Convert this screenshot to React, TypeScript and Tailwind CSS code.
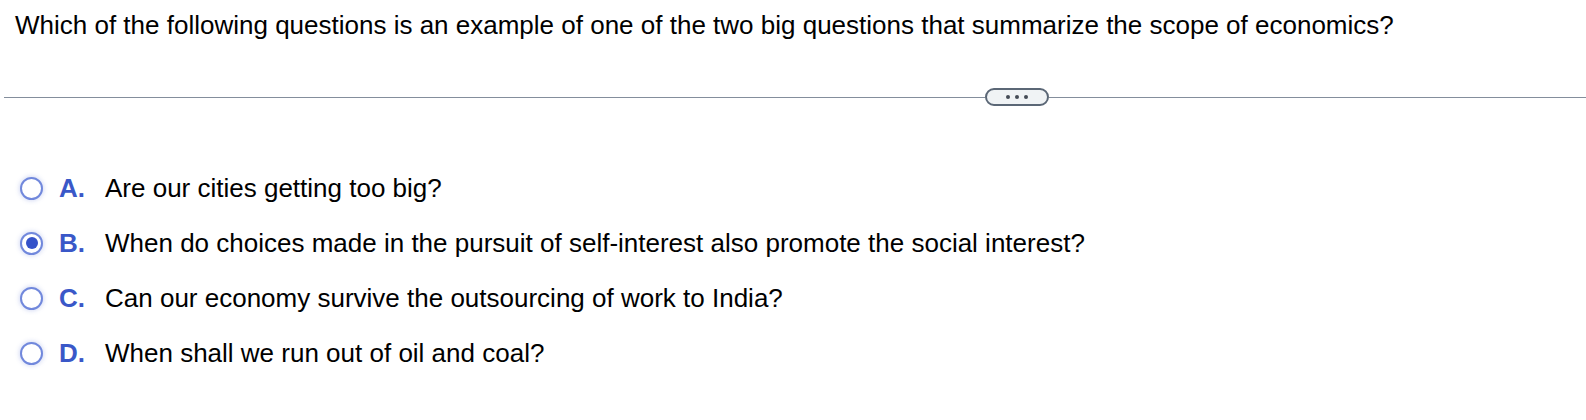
import React from 'react'

const FONT = { fontFamily: '"Liberation Sans", Arial, sans-serif' }

const OPTIONS = [
  { letter: 'A.', text: 'Are our cities getting too big?' },
  { letter: 'B.', text: 'When do choices made in the pursuit of self-interest also promote the social interest?' },
  { letter: 'C.', text: 'Can our economy survive the outsourcing of work to India?' },
  { letter: 'D.', text: 'When shall we run out of oil and coal?' },
]

function Radio({ checked }: { checked: boolean }) {
  return (
    <span className="flex h-[23px] w-[23px] shrink-0 items-center justify-center rounded-full border-2 border-[#7188dc] bg-white shadow-[0_0_4px_1px_rgba(120,140,220,0.3)]">
      {checked && <span className="h-[12px] w-[12px] rounded-full bg-[#3552c9]" />}
    </span>
  )
}

export default function App() {
  const selected = 1
  return (
    <div className="h-[420px] w-[1586px] bg-white text-black" style={FONT}>
      <p className="pl-[15px] pt-[10px] text-[26px] leading-[30px]">
        Which of the following questions is an example of one of the two big questions that summarize the scope of economics?
      </p>

      <div className="mt-[48px] flex items-center pl-[4px]">
        <div className="h-[1px] flex-1 bg-[#848e9c]" />
        <button className="flex h-[18px] w-[64px] items-center justify-center gap-[5px] rounded-full border-2 border-[#5b6776] bg-[#f0f3f5]">
          <span className="h-[4px] w-[4px] rounded-full bg-[#444b55]" />
          <span className="h-[4px] w-[4px] rounded-full bg-[#444b55]" />
          <span className="h-[4px] w-[4px] rounded-full bg-[#444b55]" />
        </button>
        <div className="h-[1px] w-[537px] bg-[#848e9c]" />
      </div>

      <div className="mt-[67px] flex flex-col gap-[25px] pl-[20px]">
        {OPTIONS.map((o, i) => (
          <div key={o.letter} className="flex h-[30px] items-center">
            <Radio checked={i === selected} />
            <span className="ml-[16px] w-[46px] text-[26px] leading-[30px] font-bold text-[#3a58c8]">{o.letter}</span>
            <span className="text-[26px] leading-[30px]">{o.text}</span>
          </div>
        ))}
      </div>
    </div>
  )
}
